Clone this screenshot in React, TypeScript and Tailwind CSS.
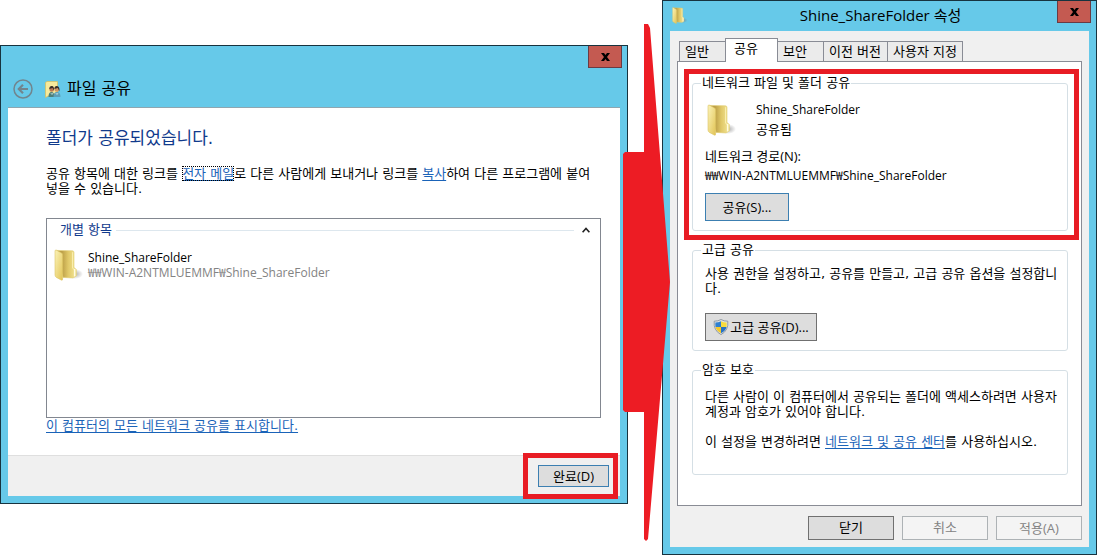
import React from "react";

const TABS = ["일반", "공유", "보안", "이전 버전", "사용자 지정"];
const TAB_WIDTHS = ["w-12", "w-[53px]", "w-[47px]", "w-[65px]", "w-[76px]"];

const LATIN = "font-['Open_Sans','Noto_Sans_CJK_KR',sans-serif]";
const LINK = "text-[#1a63b8] underline decoration-1 underline-offset-2";

const FolderIcon = ({ className = "" }: { className?: string }) => (
  <svg viewBox="0 0 30 32" className={className} aria-hidden="true">
    <defs>
      <linearGradient id="folderBack" x1="0" x2="1">
        <stop offset="0.3" stopColor="#bda048" />
        <stop offset="0.6" stopColor="#e0c868" />
        <stop offset="1" stopColor="#f5e798" />
      </linearGradient>
      <linearGradient id="folderFront" x1="0" x2="1" y2="1">
        <stop offset="0" stopColor="#fbf3b8" />
        <stop offset="1" stopColor="#e2c455" />
      </linearGradient>
      <radialGradient id="folderShadow">
        <stop offset="0" stopColor="#777777" stopOpacity="0.6" />
        <stop offset="1" stopColor="#777777" stopOpacity="0" />
      </radialGradient>
    </defs>
    <ellipse cx="21" cy="25" rx="8" ry="5" fill="url(#folderShadow)" />
    <path d="M2 1.4 L18.5 1.8 Q20 2 20 3.4 V18.5 L22.4 20.5 V27 L19 29 L9 28.4 Z" fill="url(#folderBack)" stroke="#e0cc74" strokeWidth="0.6" />
    <path d="M18.6 3.2 V19 L20.5 21" fill="none" stroke="#fff6bf" strokeWidth="0.8" />
    <path d="M1 2 Q1 0.6 2.5 1.2 L7.6 4 Q8.6 4.6 8.6 6 V30.2 Q8.6 31.6 7.2 31 L2.4 28.4 Q1 27.6 1 26 Z" fill="url(#folderFront)" stroke="#dcc564" strokeWidth="0.6" />
    <path d="M20.6 20 V27.4" stroke="#fffbe0" strokeWidth="1.4" />
  </svg>
);

const SharedFolderIcon = () => (
  <svg viewBox="0 0 16 17" className="h-[17px] w-4" aria-hidden="true">
    <path d="M0.5 1.5 L2 0.5 H12.5 V15 H3 L0.5 16.5 Z" fill="#f7ea9c" stroke="#d9bf58" strokeWidth="0.7" />
    <path d="M3.5 16 Q3.5 11 6.5 11 Q9.5 11 9.5 16 Z" fill="#4d7f79" />
    <path d="M8.5 16 Q8.5 11 11.7 11 Q15.5 11 15.5 16 Z" fill="#5d9fb8" />
    <circle cx="6.7" cy="8.4" r="2.3" fill="#b87852" />
    <circle cx="11.8" cy="8.4" r="2.4" fill="#d09563" />
    <path d="M4.2 8 Q4.4 4.8 7 5 Q9.3 5.2 9 9.6 L7.6 7 Z M9.3 8 Q9.5 4.8 12 5 Q14.9 5.2 14.4 10.4 L12.8 7 Z" fill="#382d28" />
    <path d="M5.8 12 L7 13.5 L8 12 M10.8 12 L12 13.5 L13 12" fill="none" stroke="#cfe3e3" strokeWidth="0.8" />
  </svg>
);

const ShieldIcon = () => (
  <svg viewBox="0 0 16 16" className="h-4 w-4 shrink-0" aria-hidden="true">
    <path d="M8 0.5 Q11 2.3 14.8 2.2 Q15.8 11.5 8 15.6 Q0.2 11.5 1.2 2.2 Q5 2.3 8 0.5 Z" fill="#dfe3e6" stroke="#7f8a92" strokeWidth="0.8" />
    <path d="M8 2.2 V8 H2.5 Q2.2 6 2.4 3.5 Q5.5 3.5 8 2.2 Z" fill="#2f80d0" />
    <path d="M8 2.2 V8 H13.5 Q13.8 6 13.6 3.5 Q10.5 3.5 8 2.2 Z" fill="#f8dc3c" />
    <path d="M8 8 H2.5 Q3.4 12 8 14.2 Z" fill="#f3c92c" />
    <path d="M8 8 H13.5 Q12.6 12 8 14.2 Z" fill="#2672c4" />
  </svg>
);

const CloseButton = () => (
  <button
    aria-label="닫기"
    className="flex h-[22px] w-[34px] items-center justify-center border border-t-0 border-[#6b3a43] bg-[#c45a51]"
  >
    <svg viewBox="0 0 9 8" className="h-2 w-[9px]" aria-hidden="true">
      <path d="M0 0 H3 L4.5 2 L6 0 H9 L6 4 L9 8 H6 L4.5 6 L3 8 H0 L3 4 Z" fill="#000" />
    </svg>
  </button>
);

const Highlight = ({ className }: { className: string }) => (
  <div className={`pointer-events-none absolute border-[5px] border-[#e81c24] ${className}`} />
);

const Group = ({ title, className, children }: { title: string; className: string; children: React.ReactNode }) => (
  <fieldset className={`min-w-0 rounded-[3px] border border-[#d5dfe5] pl-3 pr-2 ${className}`}>
    <legend className="-ml-1 px-px leading-4">{title}</legend>
    {children}
  </fieldset>
);

const ShareWindow = () => (
  <section className="mt-[45px] flex min-h-[459px] min-w-0 flex-1 flex-col border border-[#17333f] bg-[#66c9e9] px-[7px] pb-[7px]">
    <div className="-mr-[2px] flex justify-end">
      <CloseButton />
    </div>
    <header className="flex h-[39px] items-center pb-px pl-[5px] pt-1">
      <button aria-label="뒤로" className="mr-3 h-5 w-5">
        <svg viewBox="0 0 20 20" className="h-5 w-5" fill="none" stroke="#71858e" aria-hidden="true">
          <circle cx="10" cy="10" r="9" strokeWidth="1.5" />
          <path d="M15 10 H6.5 M10 5.8 L5.8 10 L10 14.2" strokeWidth="2.2" />
        </svg>
      </button>
      <SharedFolderIcon />
      <h1 className="ml-[6px] text-[16px] leading-5">파일 공유</h1>
    </header>
    <div className="flex flex-1 flex-col border-t border-[#8fa6b0] bg-white">
      <div className="flex flex-1 flex-col pl-[38px] pr-[19px] pt-5">
        <h2 className="text-[17px] leading-5 text-[#103a8c]">폴더가 공유되었습니다.</h2>
        <p className="mt-[18px] break-keep leading-[15px]">
          공유 항목에 대한 링크를{" "}
          <a href="#mail" className={`outline-1 -outline-offset-1 outline-dotted outline-black ${LINK}`}>전자 메일</a>로 다른 사람에게
          보내거나 링크를 <a href="#copy" className={LINK}>복사</a>하여 다른 프로그램에 붙여 넣을 수 있습니다.
        </p>
        <div className="mt-[22px] h-[200px] border border-[#828790]">
          <div className="flex h-[22px] items-center pl-[13px] pr-[10px] text-[#103a8c]">
            <span>개별 항목</span>
            <span className="ml-1 mr-2 h-px flex-1 bg-[#dde7ee]" />
            <button aria-label="접기">
              <svg viewBox="0 0 8 6" className="h-[6px] w-2" fill="none" stroke="#222" strokeWidth="1.6" aria-hidden="true">
                <path d="M0.6 5.2 L4 1.4 L7.4 5.2" />
              </svg>
            </button>
          </div>
          <div className="mt-2 flex pl-[7px]">
            <FolderIcon className="h-8 w-[30px]" />
            <div className={`ml-1 mt-px text-[12px] leading-[15px] ${LATIN}`}>
              <div>Shine_ShareFolder</div>
              <div className="text-[#838383]">₩₩WIN-A2NTMLUEMMF₩Shine_ShareFolder</div>
            </div>
          </div>
        </div>
        <a href="#all" className={`self-start leading-4 ${LINK}`}>
          이 컴퓨터의 모든 네트워크 공유를 표시합니다.
        </a>
      </div>
      <footer className="flex h-[41px] items-center justify-end border-t border-[#dfdfdf] bg-[#f0f0f0] pr-[11px]">
        <div className="relative">
          <button className={`block h-[22px] w-[71px] border border-[#3c7fb1] bg-[#dddddd] leading-4 ${LATIN}`}>완료(D)</button>
          <Highlight className="-bottom-3 -left-[15px] -right-[9px] -top-3" />
        </div>
      </footer>
    </div>
  </section>
);

const PropertiesWindow = () => (
  <section className="flex min-h-[555px] w-[435px] shrink-0 flex-col border border-[#17333f] bg-[#66c9e9] px-[7px] pb-[7px]">
    <header className="flex h-[30px] items-start">
      <FolderIcon className="ml-[2px] mt-[6px] h-[17px] w-4" />
      <h1 className={`flex-1 pl-4 text-center text-[15px] leading-[29px] ${LATIN}`}>Shine_ShareFolder 속성</h1>
      <div className="-mr-[2px]">
        <CloseButton />
      </div>
    </header>
    <div className="flex flex-1 flex-col bg-[#f0f0f0] px-[7px] pb-[6px] pt-[7px]">
      <div role="tablist" className="flex items-end pl-[2px]">
        {TABS.map((tab, i) => (
          <button
            key={tab}
            role="tab"
            aria-selected={i === 1}
            className={`border border-b-0 border-[#898c95] text-left ${TAB_WIDTHS[i]} ${
              i === 1 ? "relative -mx-px -mb-px h-6 bg-white pb-1 pl-2" : "-mr-px h-5 bg-[#ebebeb] pl-[5px]"
            }`}
          >
            {tab}
          </button>
        ))}
      </div>
      <div className="flex h-[445px] flex-col gap-[11px] border border-[#898c95] bg-white pl-[14px] pr-[13px] pt-[13px]">
        <div className="relative">
          <Group title="네트워크 파일 및 폴더 공유" className="h-[156px]">
            <div className="mt-[13px] flex">
              <FolderIcon className="ml-[2px] h-8 w-[30px]" />
              <div className="-mt-1 ml-[19px] leading-5">
                <div className={`text-[12px] ${LATIN}`}>Shine_ShareFolder</div>
                <div>공유됨</div>
              </div>
            </div>
            <div className={`mt-[6px] leading-5 ${LATIN}`}>네트워크 경로(N):</div>
            <div className={`text-[12px] leading-5 ${LATIN}`}>₩₩WIN-A2NTMLUEMMF₩Shine_ShareFolder</div>
            <button className={`mt-[7px] block h-7 w-[84px] border border-[#3c7fb1] bg-[#dddddd] ${LATIN}`}>공유(S)...</button>
          </Group>
          <Highlight className="-bottom-[9px] -left-2 -right-[11px] -top-[6px]" />
        </div>
        <Group title="고급 공유" className="h-[109px]">
          <p className="mt-2 break-all leading-[15px]">사용 권한을 설정하고, 공유를 만들고, 고급 공유 옵션을 설정합니다.</p>
          <button className={`mt-[17px] flex h-7 w-28 items-center justify-center gap-px border border-[#707070] bg-[#dddddd] ${LATIN}`}>
            <ShieldIcon />
            고급 공유(D)...
          </button>
        </Group>
        <Group title="암호 보호" className="h-[113px]">
          <p className="mt-[11px] leading-[15px]">
            다른 사람이 이 컴퓨터에서 공유되는 폴더에 액세스하려면 사용자 계정과 암호가 있어야 합니다.
          </p>
          <p className="mt-[15px] leading-[15px]">
            이 설정을 변경하려면 <a href="#center" className={LINK}>네트워크 및 공유 센터</a>를 사용하십시오.
          </p>
        </Group>
      </div>
      <div className="mt-[10px] flex justify-end gap-2">
        <button className="h-6 w-[86px] border border-[#707070] bg-[#dddddd]">닫기</button>
        <button disabled className="h-6 w-[86px] border border-[#adb2b5] bg-[#f4f4f4] text-[#838383]">취소</button>
        <button disabled className={`h-6 w-[86px] border border-[#adb2b5] bg-[#f4f4f4] text-[#838383] ${LATIN}`}>적용(A)</button>
      </div>
    </div>
  </section>
);

const App = () => {
  return (
    <main className="flex items-start bg-white font-['DejaVu_Sans','Noto_Sans_CJK_KR',sans-serif] text-[13px] leading-4 text-black">
      <ShareWindow />
      <div className="relative w-[34px] shrink-0">
        <svg viewBox="0 0 47 518" className="absolute -left-[5px] top-[23px] z-10 h-[518px] w-[47px] max-w-none" aria-hidden="true">
          <path d="M21 1 H25 L27 5 L47 259 L25 516 L23 518 L21 516 V389 H2 L0 387 V131 L2 129 H21 Z" fill="#ed1c24" />
        </svg>
      </div>
      <PropertiesWindow />
    </main>
  );
};

export default App;
